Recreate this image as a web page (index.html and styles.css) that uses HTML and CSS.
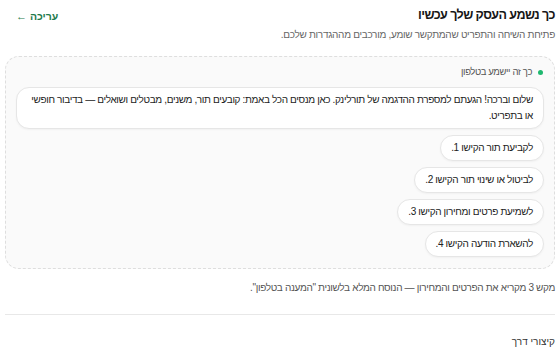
FILE: index.html
```html
<!DOCTYPE html>
<html lang="he" dir="rtl">
<head>
  <meta charset="UTF-8">
  <meta name="viewport" content="width=device-width, initial-scale=1.0">
  <title>כך נשמע העסק שלך עכשיו</title>
  <link rel="stylesheet" href="styles.css">
</head>
<body>
  <!-- Header -->
  <div class="preview-header">
    <h2 class="preview-title">כך נשמע העסק שלך עכשיו</h2>
    <a class="edit-link" href="#">עריכה <span class="arrow">←</span></a>
  </div>
  <p class="preview-sub">פתיחת השיחה והתפריט שהמתקשר שומע, מורכבים מההגדרות שלכם.</p>

  <!-- Phone preview -->
  <div class="phone-card">
    <div class="phone-label"><span class="dot"></span>כך זה יישמע בטלפון</div>
    <div class="bubbles">
      <div class="bubble">שלום וברכה! הגעתם למספרת ההדגמה של תורלינק. כאן מנסים הכל באמת: קובעים תור, משנים, מבטלים ושואלים — בדיבור חופשי או בתפריט.</div>
      <div class="bubble">לקביעת תור הקישו 1.</div>
      <div class="bubble">לביטול או שינוי תור הקישו 2.</div>
      <div class="bubble">לשמיעת פרטים ומחירון הקישו 3.</div>
      <div class="bubble">להשארת הודעה הקישו 4.</div>
    </div>
  </div>
  <p class="preview-note">מקש 3 מקריא את הפרטים והמחירון — הנוסח המלא בלשונית "המענה בטלפון".</p>

  <hr class="divider">

  <h3 class="section-title">קיצורי דרך</h3>
</body>
</html>
```

FILE: styles.css
```css
body {
  font-family: "Liberation Sans", Arial, sans-serif;
  margin: 0;
  padding: 0 5px;
  background-color: #fff;
  color: #222;
}
.preview-header {
  display: flex;
  justify-content: space-between;
  align-items: center;
  padding: 7px 0 0 0;
}
.preview-title {
  margin: 0;
  font-size: 12.5px;
  line-height: 17px;
  letter-spacing: -0.55px;
  font-weight: bold;
  color: #161616;
}
.edit-link {
  color: #1e7a4c;
  font-size: 10.5px;
  font-weight: bold;
  text-decoration: none;
  margin-left: 11px;
}
.edit-link .arrow {
  font-size: 11px;
}
.preview-sub {
  margin: 3px 0 0 0;
  font-size: 10px;
  line-height: 16px;
  letter-spacing: -0.3px;
  color: #666;
}
.phone-card {
  margin-top: 13px;
  padding: 8px 10px 11px 10px;
  border: 1px dashed #dedede;
  border-radius: 14px;
  background-color: #fafafa;
}
.phone-label {
  display: flex;
  align-items: center;
  gap: 6px;
  font-size: 9.5px;
  line-height: 14px;
  letter-spacing: -0.4px;
  color: #555;
  margin-right: 1px;
}
.dot {
  width: 5px;
  height: 5px;
  border-radius: 50%;
  background-color: #1fb86f;
}
.bubbles {
  display: flex;
  flex-direction: column;
  align-items: flex-start;
  gap: 6px;
  margin-top: 8px;
}
.bubble {
  background-color: #fff;
  border: 1px solid #e6e6e6;
  border-radius: 13px;
  padding: 4px 10px;
  font-size: 10px;
  line-height: 16px;
  letter-spacing: -0.36px;
  color: #222;
  box-shadow: 0 1px 2px rgba(0, 0, 0, 0.04);
}
.preview-note {
  margin: 11px 0 0 0;
  font-size: 10px;
  line-height: 15px;
  letter-spacing: -0.34px;
  color: #555;
}
.divider {
  border: none;
  border-top: 1px solid #e8e8e8;
  margin: 19px 0 0 0;
}
.section-title {
  margin: 19px 0 0 0;
  font-size: 10px;
  line-height: 15px;
  font-weight: normal;
  color: #333;
}
```
